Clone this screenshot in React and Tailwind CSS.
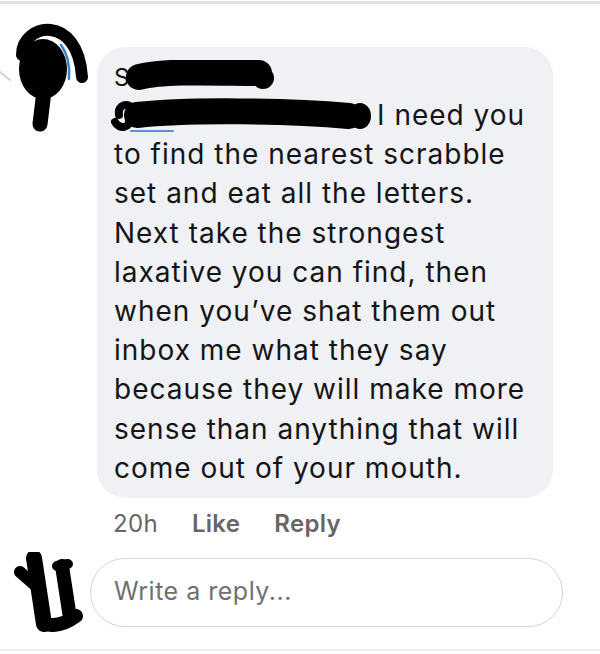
import React from 'react';

const lines = [
  'to find the nearest scrabble',
  'set and eat all the letters.',
  'Next take the strongest',
  'laxative you can find, then',
  'when you\u2019ve shat them out',
  'inbox me what they say',
  'because they will make more',
  'sense than anything that will',
  'come out of your mouth.',
];

function TopAvatar() {
  return (
    <svg width="95" height="130" viewBox="0 0 95 130" className="block">
      {/* thread line stub */}
      <path d="M0 59 L10 67" stroke="#d2d2d2" strokeWidth="2" fill="none" strokeLinecap="round" />
      {/* scribbled avatar */}
      <path d="M22 42 C22 10, 78 0, 82 64" stroke="#000" strokeWidth="12" fill="none" strokeLinecap="round" />
      <ellipse cx="43" cy="56" rx="24" ry="30" fill="#000" />
      <path d="M44 78 L40 111" stroke="#000" strokeWidth="15" fill="none" strokeLinecap="round" />
      <path d="M61 32 C67 40, 70 52, 69 66" stroke="#3b82c4" strokeWidth="2.5" fill="none" strokeLinecap="round" />
    </svg>
  );
}

function BottomAvatar() {
  return (
    <svg width="90" height="80" viewBox="0 0 90 80" className="block">
      <path d="M34 6 L44 72" stroke="#000" strokeWidth="16" fill="none" strokeLinecap="round" />
      <path d="M20 20 L36 34" stroke="#000" strokeWidth="12" fill="none" strokeLinecap="round" />
      <path d="M62 14 L70 66" stroke="#000" strokeWidth="14" fill="none" strokeLinecap="round" />
      <path d="M45 72 Q60 76, 76 64" stroke="#000" strokeWidth="14" fill="none" strokeLinecap="round" />
      <path d="M57 14 L68 12" stroke="#000" strokeWidth="10" fill="none" strokeLinecap="round" />
    </svg>
  );
}

export default function App() {
  return (
    <div className="w-[600px] h-[654px] bg-white overflow-hidden flex flex-col" style={{ fontFamily: 'Inter, "Liberation Sans", sans-serif' }}>
      <div className="h-[3px] mt-[1px] bg-[#e2e2e2]" />

      {/* comment */}
      <div className="flex items-start pt-[9px]">
        <div className="w-[97px] shrink-0">
          <TopAvatar />
        </div>
        <div className="w-[456px] mt-[34px] bg-[#eff1f5] rounded-[28px] pl-[17px] pt-[13px] pb-[10px] text-[#151515] text-[28px] tracking-[1px] leading-[39.2px]">
          {/* name (redacted) */}
          <div className="flex items-center h-[36px]">
            <span className="text-[24px] leading-none tracking-normal">S</span>
            <svg width="150" height="36" viewBox="0 0 150 36" className="-ml-[4px]">
              <path d="M14 17 C40 10, 100 13, 134 13" stroke="#000" strokeWidth="26" fill="none" strokeLinecap="round" />
              <circle cx="138" cy="18" r="11" fill="#000" />
            </svg>
          </div>
          {/* redacted line + message start */}
          <div className="flex items-center">
            <svg width="264" height="38" viewBox="0 0 264 38" className="shrink-0 -ml-[3px]">
              <path d="M4 25 C8 33, 20 31, 18 22" stroke="#000" strokeWidth="8" fill="none" strokeLinecap="round" />
              <path d="M8 18 C6 7, 18 5, 22 12" stroke="#000" strokeWidth="8" fill="none" strokeLinecap="round" />
              <path d="M20 34 L62 34" stroke="#5b8fd0" strokeWidth="2" fill="none" strokeLinecap="round" />
              <path d="M26 18 C80 12, 180 14, 238 19" stroke="#000" strokeWidth="26" fill="none" strokeLinecap="round" />
              <ellipse cx="249" cy="19" rx="11" ry="13" fill="#000" />
            </svg>
            <span className="pl-[2px]">I need you</span>
          </div>
          <p>
            {lines.map((l, i) => (
              <React.Fragment key={i}>
                {l}
                {i < lines.length - 1 && <br />}
              </React.Fragment>
            ))}
          </p>
        </div>
      </div>

      {/* actions */}
      <div className="flex gap-[34px] pl-[113px] mt-[12px] text-[24px] text-[#666] leading-[28px] tracking-[0.3px]">
        <span>20h</span>
        <span className="font-semibold">Like</span>
        <span className="font-semibold">Reply</span>
      </div>

      {/* reply box */}
      <div className="flex items-center mt-[14px]">
        <div className="w-[90px] shrink-0">
          <BottomAvatar />
        </div>
        <div className="w-[473px] h-[69px] rounded-full border-[1.5px] border-[#d4d4d4] flex items-center pl-[23px] text-[25px] text-[#707070] tracking-[0.5px]">
          Write a reply...
        </div>
      </div>

      <div className="flex-1" />
      <div className="h-[2px] mb-[3px] bg-[#ededed]" />
    </div>
  );
}
